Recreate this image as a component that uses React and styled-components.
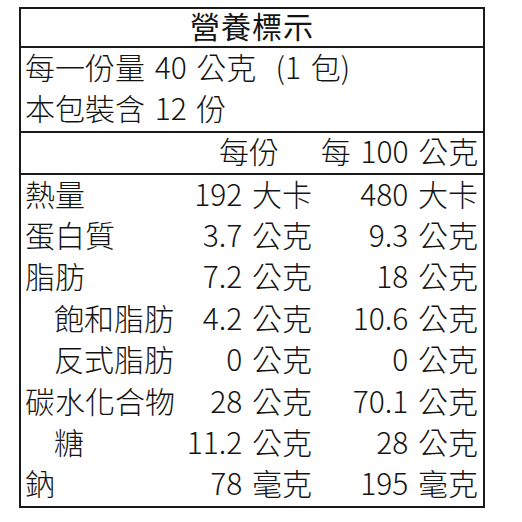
import React from 'react';
import styled, { createGlobalStyle } from 'styled-components';

const GlobalStyle = createGlobalStyle`
	body {
		margin: 0;
		background: #fff;
		font-family: 'Noto Sans CJK TC', 'Noto Sans', sans-serif;
		color: #141414;
	}
`;

const Page = styled.div`
	padding: 7px 0 0 19px;
`;

const Label = styled.div`
	width: 466px;
	box-sizing: border-box;
	border: 2px solid #1a1a1a;
	font-size: 30px;
	font-weight: 300;
	line-height: 1;
	word-spacing: 3px;
`;

const Title = styled.div`
	height: 39px;
	box-sizing: border-box;
	padding-bottom: 5px;
	display: flex;
	align-items: center;
	justify-content: center;
	border-bottom: 2px solid #1a1a1a;
	font-weight: 400;
	letter-spacing: 1px;
`;

const Serving = styled.div`
	border-bottom: 2px solid #1a1a1a;
	padding-left: 4px;
`;

const Line = styled.div`
	height: 41.5px;
	box-sizing: border-box;
	padding-bottom: 6px;
	display: flex;
	align-items: center;
	white-space: pre;
`;

const Row = styled.div`
	display: grid;
	grid-template-columns: 161px 134px 167px;
	height: ${p => p.$h || 41.4}px;
	box-sizing: border-box;
	padding-bottom: 6px;
	align-items: center;
	border-bottom: ${p => (p.$rule ? '2px solid #1a1a1a' : 'none')};
`;

const Name = styled.div`
	padding-left: ${p => (p.$indent ? 33 : 4)}px;
	white-space: nowrap;
`;

const Value = styled.div`
	text-align: ${p => (p.$center ? 'center' : 'right')};
	padding-right: ${p => (p.$center ? 0 : p.$pad)}px;
	white-space: nowrap;
`;

const rows = [
	['熱量', '192 大卡', '480 大卡'],
	['蛋白質', '3.7 公克', '9.3 公克'],
	['脂肪', '7.2 公克', '18 公克'],
	['飽和脂肪', '4.2 公克', '10.6 公克', true],
	['反式脂肪', '0 公克', '0 公克', true],
	['碳水化合物', '28 公克', '70.1 公克'],
	['糖', '11.2 公克', '28 公克', true],
	['鈉', '78 毫克', '195 毫克']
];

const App = () => (
	<Page>
		<GlobalStyle />
		<Label>
			<Title>營養標示</Title>
			<Serving>
				<Line>每一份量 40 公克  (1 包)</Line>
				<Line>本包裝含 12 份</Line>
			</Serving>
			<Row $rule $h={42}>
				<Name />
				<Value $center>每份</Value>
				<Value $center>每 100 公克</Value>
			</Row>
			{rows.map(([name, serving, per100, indent]) => (
				<Row key={name}>
					<Name $indent={indent}>{name}</Name>
					<Value $pad={4}>{serving}</Value>
					<Value $pad={5}>{per100}</Value>
				</Row>
			))}
		</Label>
	</Page>
);

export default App;
